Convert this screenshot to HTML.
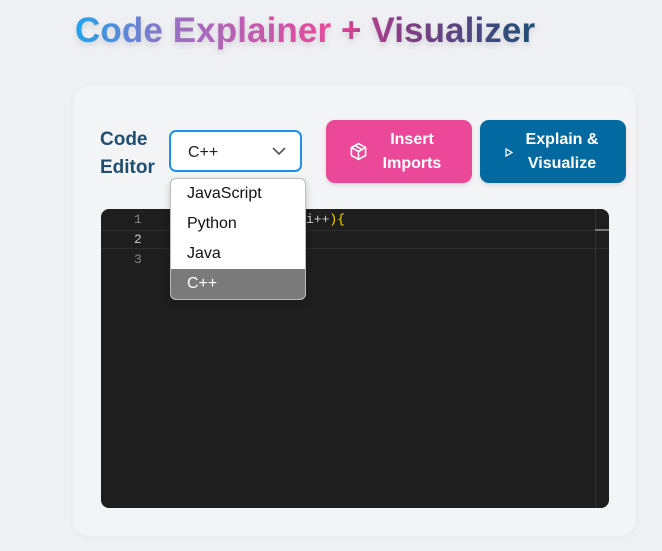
<!DOCTYPE html>
<html><head><style>
body{margin:0;width:662px;height:551px;background:#eff0f3;font-family:"Liberation Sans",sans-serif;overflow:hidden;position:relative}
h1{position:absolute;left:75px;top:11px;margin:0;font-size:35px;font-weight:bold;letter-spacing:0.1px;background:linear-gradient(90deg,#1ea3ec 0%,#9b6fc4 22%,#e8489a 55%,#8a3e86 70%,#1b4f78 100%);-webkit-background-clip:text;color:transparent;filter:drop-shadow(0 3px 3px rgba(0,0,0,0.12));white-space:nowrap}
.card{position:absolute;left:73px;top:86px;width:563px;height:450px;background:#f3f4f6;border-radius:16px;box-shadow:0 1px 6px rgba(0,0,0,0.04)}
.lbl{position:absolute;left:100px;top:126px;font-size:19px;font-weight:bold;color:#1f4f70;line-height:28px}
.sel{position:absolute;left:169px;top:130px;width:133px;height:42px;border:2px solid #1e90e8;border-radius:7px;background:#fff;box-sizing:border-box;font-size:16px;color:#222;padding:12px 0 0 17px}
.sel svg{position:absolute;right:14px;top:15px}
.btn{position:absolute;top:120px;height:63px;border-radius:9px;color:#fff;font-weight:bold;font-size:16px;line-height:24px;box-shadow:0 2px 4px rgba(0,0,0,0.12)}
.b1{left:326px;width:146px;background:#ec4899}
.b2{left:480px;width:146px;background:#0369a1}
.btn span{position:absolute;text-align:center}
.ed{position:absolute;left:101px;top:209px;width:508px;height:299px;background:#1e1e1e;border-radius:8px;overflow:hidden;font-family:"Liberation Mono",monospace;font-size:13px}
.ln{position:absolute;left:33px;color:#858585}
.dd{position:absolute;left:170px;top:178px;width:134px;height:120px;background:#fff;border:1px solid #bbb;border-radius:6px;overflow:hidden;box-shadow:0 3px 8px rgba(0,0,0,0.2);font-size:16px;color:#111}
.dd div{height:30px;line-height:30px;padding-left:16px}
</style></head><body>
<h1>Code Explainer + Visualizer</h1>
<div class="card"></div>
<div class="lbl">Code<br>Editor</div>
<div class="sel">C++<svg width="14" height="9" viewBox="0 0 14 9"><path d="M1 1l6 6 6-6" stroke="#555" stroke-width="1.6" fill="none"/></svg></div>
<div class="btn b1"><svg style="position:absolute;left:23px;top:22px" width="19" height="19" viewBox="0 0 24 24" fill="none" stroke="#fff" stroke-width="2" stroke-linejoin="round"><path d="M12 2l9 5v10l-9 5-9-5V7z M3 7l9 5 9-5 M12 12v10 M7.5 4.5l9 5"/></svg><span style="left:50px;width:72px;top:8px">Insert<br>Imports</span></div>
<div class="btn b2"><svg style="position:absolute;left:25px;top:28px" width="8" height="9" viewBox="0 0 8 9"><path d="M1 1l6 3.5L1 8z" stroke="#fff" stroke-width="1.2" fill="none"/></svg><span style="left:40px;width:84px;top:8px">Explain &amp;<br>Visualize</span></div>
<div class="ed">
<div style="position:absolute;left:0;right:0;top:21px;height:17px;border-top:1px solid #2e2e2e;border-bottom:1px solid #2e2e2e"></div>
<div style="position:absolute;left:494px;top:0;bottom:0;border-left:1px solid #333"></div>
<div style="position:absolute;left:494px;top:20px;width:14px;height:2px;background:#777"></div>
<div class="ln" style="top:3px">1</div><div class="ln" style="top:23px;color:#ccc">2</div><div class="ln" style="top:43px">3</div>
<div style="position:absolute;left:205px;top:3px;color:#ccc">i++<span style="color:#ffd700">){</span></div>
</div>
<div class="dd"><div>JavaScript</div><div>Python</div><div>Java</div><div style="background:#7a7a7a;color:#fff">C++</div></div>
</body></html>
